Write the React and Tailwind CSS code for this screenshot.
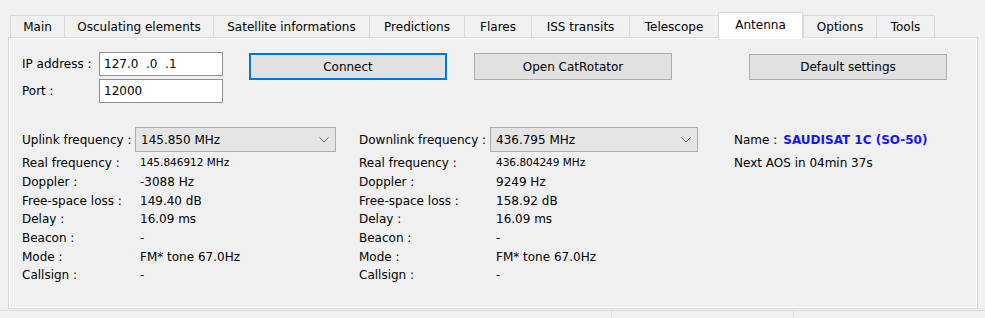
import React from 'react';

const tabs = [
  { label: 'Main', w: 54 },
  { label: 'Osculating elements', w: 149 },
  { label: 'Satellite informations', w: 156 },
  { label: 'Predictions', w: 95 },
  { label: 'Flares', w: 67 },
  { label: 'ISS transits', w: 98 },
  { label: 'Telescope', w: 89 },
  { label: 'Antenna', w: 85, active: true },
  { label: 'Options', w: 73 },
  { label: 'Tools', w: 59 },
];

const uplink = [
  ['Real frequency :', '145.846912 MHz', true],
  ['Doppler :', '-3088 Hz'],
  ['Free-space loss :', '149.40 dB'],
  ['Delay :', '16.09 ms'],
  ['Beacon :', '-'],
  ['Mode :', 'FM* tone 67.0Hz'],
  ['Callsign :', '-'],
];

const downlink = [
  ['Real frequency :', '436.804249 MHz', true],
  ['Doppler :', '9249 Hz'],
  ['Free-space loss :', '158.92 dB'],
  ['Delay :', '16.09 ms'],
  ['Beacon :', '-'],
  ['Mode :', 'FM* tone 67.0Hz'],
  ['Callsign :', '-'],
];

function Chevron() {
  return (
    <svg width="10" height="6" viewBox="0 0 10 6" className="shrink-0">
      <path d="M0.5 0.5 L5 5 L9.5 0.5" fill="none" stroke="#606060" strokeWidth="1" />
    </svg>
  );
}

function Combo({ value, width }) {
  return (
    <div
      className="h-[25px] flex items-center justify-between bg-[#e5e5e5] border border-[#adadad] pl-[5px] pr-[6px]"
      style={{ width }}
    >
      <span>{value}</span>
      <Chevron />
    </div>
  );
}

function FreqColumn({ label, labelW, value, comboW, rows, valueX, width }) {
  return (
    <div className="flex flex-col shrink-0" style={{ width }}>
      <div className="flex items-center h-[25px]">
        <div className="shrink-0" style={{ width: labelW }}>{label}</div>
        <Combo value={value} width={comboW} />
      </div>
      <div className="mt-[2px]">
        {rows.map(([k, v, small]) => (
          <div key={k} className="flex items-center h-[18.67px]">
            <div className="shrink-0" style={{ width: valueX }}>{k}</div>
            <div className={small ? 'text-[10.5px]' : ''}>{v}</div>
          </div>
        ))}
      </div>
    </div>
  );
}

export default function App() {
  return (
    <div
      className="w-[985px] h-[318px] bg-[#f0f0f0] overflow-hidden text-[12px] text-black"
      style={{ fontFamily: '"DejaVu Sans", sans-serif' }}
    >
      <div className="ml-[8px] pt-[12px] w-[970px]">
        {/* tab strip */}
        <div className="flex items-end h-[25px] pl-[2px]">
          {tabs.map((t, i) =>
            t.active ? (
              <div
                key={t.label}
                className="relative z-10 h-[26px] -mb-px bg-white border-t border-l border-r border-[#d9d9d9] flex items-center justify-center pb-[2px] shrink-0"
                style={{ width: t.w }}
              >
                {t.label}
              </div>
            ) : (
              <div
                key={t.label}
                className={
                  'h-[22px] border-t border-l border-[#d9d9d9] flex items-center justify-center shrink-0 ' +
                  (i === tabs.length - 1 ? 'border-r' : '')
                }
                style={{ width: t.w }}
              >
                {t.label}
              </div>
            )
          )}
        </div>

        {/* tab page */}
        <div className="h-[272px] border border-[#d9d9d9]">
          <div className="h-full border border-white pl-[12px] pt-[13px]">
            <div className="flex items-start">
              <div className="flex flex-col gap-[3px]">
                <div className="flex items-center h-[24px]">
                  <div className="w-[77px]">IP address :</div>
                  <div className="w-[124px] h-[24px] bg-white border border-[#8f8f8f] flex items-center pl-[4px] whitespace-pre">
                    127.0  .0  .1
                  </div>
                </div>
                <div className="flex items-center h-[24px]">
                  <div className="w-[77px]">Port :</div>
                  <div className="w-[124px] h-[24px] bg-white border border-[#8f8f8f] flex items-center pl-[4px]">
                    12000
                  </div>
                </div>
              </div>
              <div className="flex items-center mt-[1px] ml-[26px]">
                <button className="w-[198px] h-[27px] bg-[#e1e1e1] border-2 border-[#0078d7]">Connect</button>
                <button className="w-[198px] h-[27px] ml-[27px] bg-[#e1e1e1] border border-[#adadad]">Open CatRotator</button>
                <button className="w-[198px] h-[26px] ml-[77px] bg-[#e1e1e1] border border-[#adadad]">Default settings</button>
              </div>
            </div>

            <div className="flex items-start mt-[24px]">
              <FreqColumn
                label="Uplink frequency :"
                labelW={113}
                value="145.850 MHz"
                comboW={201}
                rows={uplink}
                valueX={118}
                width={337}
              />
              <FreqColumn
                label="Downlink frequency :"
                labelW={131}
                value="436.795 MHz"
                comboW={208}
                rows={downlink}
                valueX={137}
                width={375}
              />
              <div className="flex flex-col">
                <div className="flex items-center h-[25px]">
                  <span>Name :</span>
                  <span className="ml-[6px] font-bold text-[#1414ff]">SAUDISAT 1C (SO-50)</span>
                </div>
                <div className="flex items-center h-[18.67px] mt-[2px]">Next AOS in 04min 37s</div>
              </div>
            </div>
          </div>
        </div>
      </div>

      {/* status strip below */}
      <div className="mt-[1px] h-[8px] border-t border-[#dcdcdc] flex">
        <div className="w-[612px] border-r border-[#dcdcdc]" />
        <div className="w-[182px] border-r border-[#dcdcdc]" />
      </div>
    </div>
  );
}
